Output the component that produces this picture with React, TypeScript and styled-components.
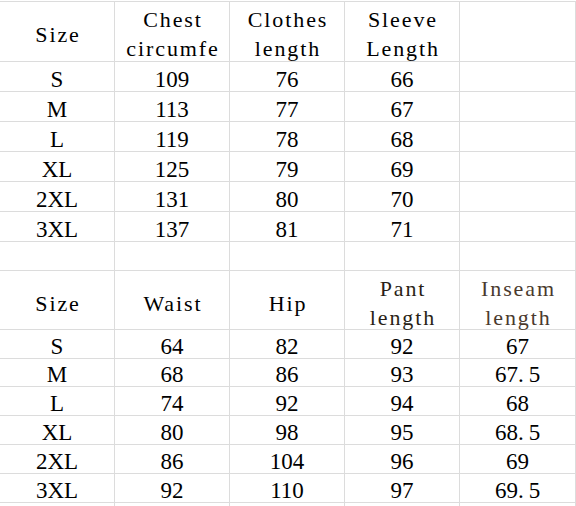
import React from "react";
import styled, { createGlobalStyle } from "styled-components";

const LINE = "#dcdcdc";

const GlobalStyle = createGlobalStyle`
  html, body {
    margin: 0;
    padding: 0;
    background: #ffffff;
    overflow: hidden;
  }
`;

const Sheet = styled.div`
  margin-top: 1px;
  width: 576px;
  border-top: 1px solid ${LINE};
  display: flex;
  flex-direction: column;
`;

const Row = styled.div<{ $h: number }>`
  display: grid;
  grid-template-columns: 115px 115px 115px 115px 116px;
  height: ${(p) => p.$h}px;
  box-sizing: border-box;
  border-bottom: 1px solid ${LINE};
  flex: none;
`;

const Cell = styled.div`
  border-right: 1px solid ${LINE};
  display: flex;
  justify-content: center;
  min-width: 0;
  box-sizing: border-box;
  color: #000;
`;

const HeadCell = styled(Cell)<{ $tone?: string }>`
  align-items: center;
  padding-top: 3px;
  padding-left: 2px;
  font-family: "Liberation Serif", "Times New Roman", serif;
  font-size: 22px;
  letter-spacing: 1.9px;
  line-height: 29px;
  text-align: center;
  white-space: pre;
  color: ${(p) => p.$tone ?? "#000"};
`;

const DataCell = styled(Cell)`
  align-items: flex-end;
  font-family: "Liberation Serif", "Times New Roman", serif;
  font-size: 23px;
  line-height: 23px;
  white-space: nowrap;
`;

const Dot = styled.span`
  margin-right: 5px;
`;

type Table = {
  head: { text: string; tone?: string }[];
  headH: number;
  rows: string[][];
  rowH: number[];
};

const tops: Table = {
  head: [
    { text: "Size" },
    { text: "Chest\ncircumfe" },
    { text: "Clothes\nlength" },
    { text: "Sleeve\nLength" },
    { text: "" },
  ],
  headH: 60,
  rows: [
    ["S", "109", "76", "66", ""],
    ["M", "113", "77", "67", ""],
    ["L", "119", "78", "68", ""],
    ["XL", "125", "79", "69", ""],
    ["2XL", "131", "80", "70", ""],
    ["3XL", "137", "81", "71", ""],
  ],
  rowH: [30, 30, 30, 30, 30, 30],
};

const pants: Table = {
  head: [
    { text: "Size" },
    { text: "Waist" },
    { text: "Hip" },
    { text: "Pant\nlength", tone: "#2a1f16" },
    { text: "Inseam\nlength", tone: "#4a3a2e" },
  ],
  headH: 59,
  rows: [
    ["S", "64", "82", "92", "67"],
    ["M", "68", "86", "93", "67.5"],
    ["L", "74", "92", "94", "68"],
    ["XL", "80", "98", "95", "68.5"],
    ["2XL", "86", "104", "96", "69"],
    ["3XL", "92", "110", "97", "69.5"],
  ],
  rowH: [29, 28, 29, 29, 29, 29],
};

function Value({ v }: { v: string }) {
  const i = v.indexOf(".");
  if (i < 0) return <>{v}</>;
  return (
    <>
      {v.slice(0, i)}
      <Dot>.</Dot>
      {v.slice(i + 1)}
    </>
  );
}

function SizeTable({ t }: { t: Table }) {
  return (
    <>
      <Row $h={t.headH}>
        {t.head.map((h, i) => (
          <HeadCell key={i} $tone={h.tone}>
            {h.text}
          </HeadCell>
        ))}
      </Row>
      {t.rows.map((r, ri) => (
        <Row key={ri} $h={t.rowH[ri]}>
          {r.map((v, ci) => (
            <DataCell key={ci}>
              <Value v={v} />
            </DataCell>
          ))}
        </Row>
      ))}
    </>
  );
}

function BlankRow({ h }: { h: number }) {
  return (
    <Row $h={h}>
      {[0, 1, 2, 3, 4].map((i) => (
        <DataCell key={i} />
      ))}
    </Row>
  );
}

export default function App() {
  return (
    <>
      <GlobalStyle />
      <Sheet>
        <SizeTable t={tops} />
        <BlankRow h={29} />
        <SizeTable t={pants} />
        <BlankRow h={4} />
      </Sheet>
    </>
  );
}
